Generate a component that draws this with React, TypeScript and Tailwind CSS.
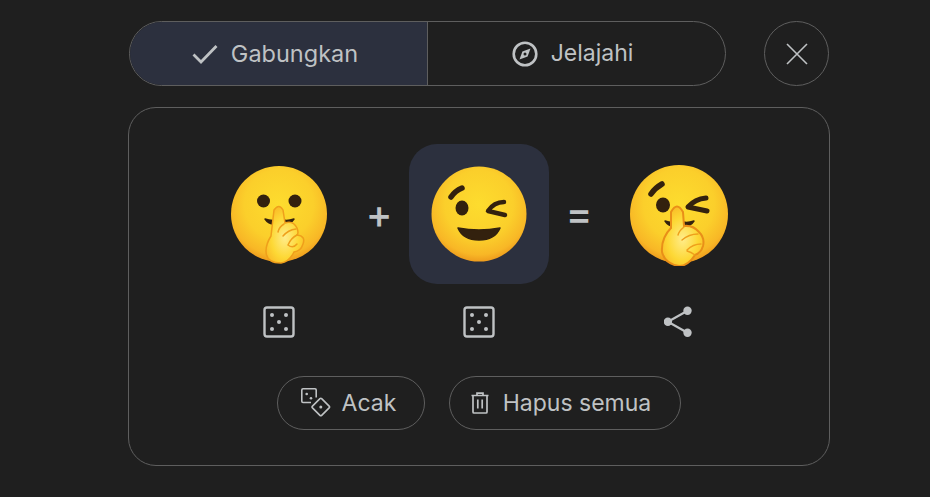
import React from 'react';

const FaceDefs = () => (
  <defs>
    <radialGradient id="face" cx="50%" cy="40%" r="60%">
      <stop offset="0%" stopColor="#fddc2e" />
      <stop offset="60%" stopColor="#fbcf2b" />
      <stop offset="88%" stopColor="#f8b726" />
      <stop offset="100%" stopColor="#ee9c1d" />
    </radialGradient>
    <radialGradient id="hand" cx="50%" cy="55%" r="60%">
      <stop offset="0%" stopColor="#ffec8a" />
      <stop offset="60%" stopColor="#fdd835" />
      <stop offset="100%" stopColor="#f9b825" />
    </radialGradient>
  </defs>
);

const ink = '#33210e';
const fg = '#bfc2c4';

const ShushEmoji = () => (
  <svg viewBox="-52 -52 104 104" className="h-[104px] w-[104px] shrink-0">
    <FaceDefs />
    <circle r="48" fill="url(#face)" />
    <ellipse cx="-15.5" cy="-13" rx="6.5" ry="6.5" fill={ink} />
    <ellipse cx="16" cy="-13" rx="6.5" ry="6.5" fill={ink} />
    <path d="M-14 5 Q-8 7 -3 6 L-3 10 Q-10 11 -14 5Z M15 5 Q9 7 4 6 L4 10 Q11 11 15 5Z" fill={ink} strokeWidth="1.4" stroke={ink} strokeLinejoin="round" />
    <path d="M-5 -4 Q0 -11 4 -4 L6 9 Q14 6 18 14 Q20 19 18 21 Q27 22 24 30 Q22 37 15 38 Q10 48 2 49 Q-13 49 -13 37 Q-13 30 -8 22 Z" fill="url(#hand)" stroke="#ef9f1b" strokeWidth="1.5" />
    <path d="M5 10 Q0 13 -1 18 M17 15 Q9 16 4 22 M18 21 Q12 24 9 31 Q14 35 18 30" fill="none" stroke="#ef9f1b" strokeWidth="1.5" strokeLinecap="round" />
  </svg>
);

const WinkEmoji = () => (
  <svg viewBox="-52 -52 104 104" className="h-[104px] w-[104px] shrink-0">
    <FaceDefs />
    <circle r="47.5" fill="url(#face)" />
    <path d="M-28 -17 Q-24 -23 -17 -26" fill="none" stroke={ink} strokeWidth="5.5" strokeLinecap="round" />
    <ellipse cx="-17" cy="-6" rx="6.5" ry="7.5" fill={ink} />
    <path d="M25 -12 Q15 -12 9 -3 L26 1" fill="none" stroke={ink} strokeWidth="4.5" strokeLinecap="round" strokeLinejoin="round" />
    <path d="M-21 14 Q0 18 21 14 Q16 26 0 26 Q-16 26 -21 14Z" fill={ink} stroke={ink} strokeWidth="1.5" strokeLinejoin="round" />
  </svg>
);

const ResultEmoji = () => (
  <svg viewBox="-52 -52 104 104" className="h-[104px] w-[104px] shrink-0">
    <FaceDefs />
    <circle r="49" fill="url(#face)" />
    <path d="M-28 -20 Q-24 -26 -17 -30" fill="none" stroke={ink} strokeWidth="5.5" strokeLinecap="round" />
    <ellipse cx="-16" cy="-9" rx="7" ry="7.5" fill={ink} />
    <path d="M27 -16 Q16 -15 9 -7 L28 -3" fill="none" stroke={ink} strokeWidth="5" strokeLinecap="round" strokeLinejoin="round" />
    <path d="M-14 7 Q-8 9 -4 8 L-4 12 Q-10 13 -14 7Z M15 7 Q9 9 4 8 L4 12 Q11 13 15 7Z" fill={ink} stroke={ink} strokeWidth="1.4" strokeLinejoin="round" />
    <path d="M-8 -2 Q-2 -13 4 -2 L5 12 Q14 11 20 18 Q26 24 24 32 Q22 39 16 41 Q9 52 0 52 Q-14 50 -17 38 Q-18 24 -8 14 Z" fill="url(#hand)" stroke="#e98f18" strokeWidth="2" />
    <path d="M5 13 Q0 17 -1 21 M19 20 Q10 20 3 26 M22 30 Q14 30 8 36 M16 41 Q12 38 8 37" fill="none" stroke="#ef9f1b" strokeWidth="1.4" strokeLinecap="round" />
  </svg>
);

const CheckIcon = () => (
  <svg viewBox="0 0 26 20" className="h-5 w-[26px]" fill="none" stroke={fg} strokeWidth="2.8">
    <path d="M1.5 10.5 L9 18 L24.5 2" />
  </svg>
);

const CompassIcon = () => (
  <svg viewBox="0 0 26 26" className="h-[26px] w-[26px]" fill="none" stroke={fg} strokeWidth="2.6">
    <circle cx="13" cy="13" r="11.3" />
    <path d="M18.5 7.5 L15.6 15.6 L7.5 18.5 L10.4 10.4 Z" fill={fg} stroke="none" />
    <circle cx="13" cy="13" r="1.5" fill="#1f1f1f" stroke="none" />
  </svg>
);

const CloseIcon = () => (
  <svg viewBox="0 0 22 22" className="h-[22px] w-[22px]" fill="none" stroke={fg} strokeWidth="1.6">
    <path d="M1 1 L21 21 M21 1 L1 21" />
  </svg>
);

const DiceIcon = () => (
  <svg viewBox="0 0 34 34" className="h-[34px] w-[34px]" fill="none">
    <rect x="2.5" y="2.5" width="29" height="29" rx="2.5" stroke={fg} strokeWidth="2.4" />
    <g fill={fg}>
      <circle cx="10" cy="10" r="2" />
      <circle cx="24" cy="10" r="2" />
      <circle cx="17" cy="17" r="2" />
      <circle cx="10" cy="24" r="2" />
      <circle cx="24" cy="24" r="2" />
    </g>
  </svg>
);

const ShareIcon = () => (
  <svg viewBox="0 0 30 34" className="h-[34px] w-[30px]" fill={fg}>
    <circle cx="23.5" cy="5.7" r="4.2" />
    <circle cx="3.9" cy="16.7" r="4.2" />
    <circle cx="23.5" cy="27.7" r="4.2" />
    <path d="M23.5 5.7 L3.9 16.7 L23.5 27.7" fill="none" stroke={fg} strokeWidth="2.2" />
  </svg>
);

const ShuffleIcon = () => (
  <svg viewBox="0 0 30 30" className="h-[30px] w-[30px]" fill="none" stroke={fg} strokeWidth="1.6">
    <path d="M10 14.5 H2 Q0.8 14.5 0.8 13.3 V2 Q0.8 0.8 2 0.8 H14 Q15.2 0.8 15.2 2 V9.5" />
    <rect x="13.3" y="12.5" width="13" height="13" rx="1.2" transform="rotate(45 19.8 19)" />
    <g fill={fg} stroke="none">
      <circle cx="5.7" cy="6" r="1.3" />
      <circle cx="10" cy="10.3" r="1.3" />
      <circle cx="19.8" cy="19" r="1.5" />
    </g>
  </svg>
);

const TrashIcon = () => (
  <svg viewBox="0 0 18 22" className="h-[22px] w-[18px]" fill="none" stroke={fg} strokeWidth="1.7">
    <path d="M0.5 3.5 H17.5 M6 3.5 V1.2 H12 V3.5 M2 3.5 V20 Q2 21 3 21 H15 Q16 21 16 20 V3.5 M6.8 7.5 V16.5 M11.2 7.5 V16.5" />
  </svg>
);

export default function App() {
  return (
    <div className="flex h-[497px] w-[930px] flex-col items-center bg-[#1f1f1f] pt-[21px] pl-[28px] font-['Inter',sans-serif] text-[#bfc2c4]">
      {/* Mode tabs */}
      <div className="flex w-[700px] items-center justify-between">
        <div className="flex h-[65px] w-[597px] overflow-hidden rounded-full border border-[#5e5e5e]">
          <button className="flex w-[298px] items-center justify-center gap-[13px] border-r border-[#5e5e5e] bg-[#2c303e] pr-[7px] text-[23.5px]">
            <CheckIcon />
            <span>Gabungkan</span>
          </button>
          <button className="flex flex-1 items-center justify-center gap-[13px] pr-2 text-[23px]">
            <CompassIcon />
            <span>Jelajahi</span>
          </button>
        </div>
        <button className="flex h-[65px] w-[65px] items-center justify-center rounded-full border border-[#5e5e5e]">
          <CloseIcon />
        </button>
      </div>

      {/* Kitchen card */}
      <div className="mt-[21px] flex h-[359px] w-[702px] flex-col items-center rounded-[28px] border border-[#5e5e5e] pt-9">
        <div className="grid h-[140px] grid-cols-[100px_100px_100px_100px_100px] items-center justify-center">
          <div className="flex items-center justify-center">
            <ShushEmoji />
          </div>
          <div className="text-center text-[40px] leading-none font-medium">+</div>
          <div className="relative flex items-center justify-center">
            <div className="flex h-[140px] w-[140px] shrink-0 items-center justify-center rounded-[28px] bg-[#2c303e]">
              <WinkEmoji />
            </div>
          </div>
          <div className="text-center text-[40px] leading-none font-medium">=</div>
          <div className="flex items-center justify-center">
            <ResultEmoji />
          </div>
        </div>

        <div className="mt-[21px] grid grid-cols-[100px_100px_100px_100px_100px] justify-center">
          <div className="flex justify-center">
            <DiceIcon />
          </div>
          <div className="col-start-3 flex justify-center">
            <DiceIcon />
          </div>
          <div className="col-start-5 flex justify-center">
            <ShareIcon />
          </div>
        </div>

        <div className="mt-[37px] flex gap-6">
          <button className="flex h-[54px] w-[148px] items-center justify-center gap-[11px] rounded-full border border-[#5e5e5e] pr-[5px] text-[23px]">
            <ShuffleIcon />
            <span>Acak</span>
          </button>
          <button className="flex h-[54px] w-[232px] items-center justify-center gap-[14px] rounded-full border border-[#5e5e5e] pr-2 text-[23px]">
            <TrashIcon />
            <span>Hapus semua</span>
          </button>
        </div>
      </div>
    </div>
  );
}
